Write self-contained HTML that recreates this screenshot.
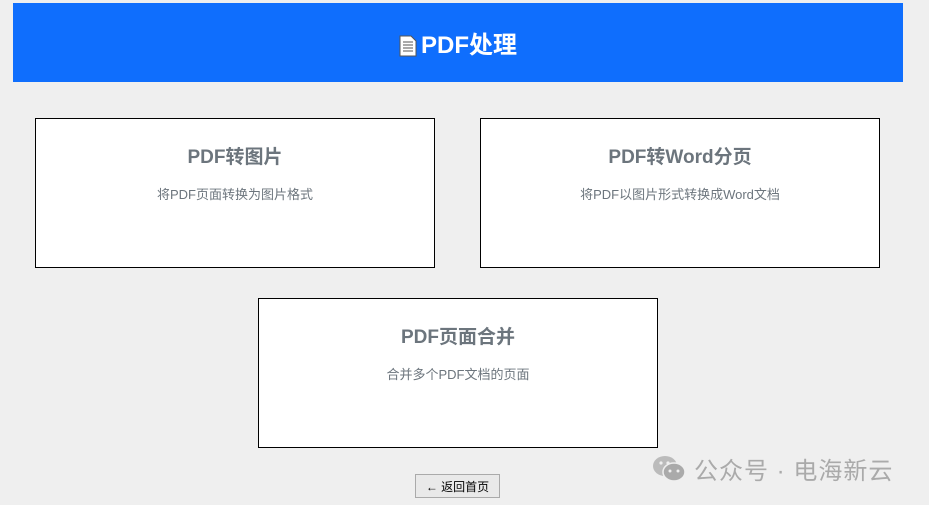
<!DOCTYPE html>
<html><head><meta charset="utf-8"><style>
body{margin:0;width:929px;height:505px;background:#efefef;font-family:"Liberation Sans","Noto Sans CJK SC",sans-serif;position:relative;overflow:hidden}
.hdr{position:absolute;left:13px;top:3px;width:890px;height:79px;background:#0f6efd;color:#fff;font-weight:bold;font-size:24px;display:flex;align-items:center;justify-content:center}
.card{position:absolute;width:398px;height:148px;background:#fff;border:1px solid #000;text-align:center}
.card h3{margin:28px 0 0;font-size:19px;color:#6c757d;font-weight:bold;line-height:22px}
.card p{margin:18px 0 0;font-size:13px;color:#6c757d;line-height:16px}
.btn{position:absolute;left:415px;top:474px;width:83px;height:22px;border:1px solid #aaa;background:#e9e9e9;font-size:12px;display:flex;align-items:center;justify-content:center;color:#000}
.wm{position:absolute;left:652px;top:451px;font-size:24px;color:#aaa;display:flex;align-items:center;gap:8px;letter-spacing:1px}
</style></head><body>
<div class="hdr"><svg width="18" height="22" viewBox="0 0 18 22" style="margin-right:4px;margin-top:6px"><path d="M1 1h11l5 5v15H1z" fill="#fff" stroke="#555" stroke-width="1"/><path d="M4 7h10M4 10h10M4 13h10M4 16h10" stroke="#555" stroke-width="1"/></svg>PDF处理</div>
<div class="card" style="left:35px;top:118px"><h3>PDF转图片</h3><p>将PDF页面转换为图片格式</p></div>
<div class="card" style="left:480px;top:118px"><h3>PDF转Word分页</h3><p>将PDF以图片形式转换成Word文档</p></div>
<div class="card" style="left:258px;top:298px"><h3>PDF页面合并</h3><p>合并多个PDF文档的页面</p></div>
<div class="btn">← 返回首页</div>
<div class="wm"><svg width="34" height="28" viewBox="0 0 34 28"><ellipse cx="13" cy="11" rx="12" ry="10" fill="#bbb"/><ellipse cx="22" cy="17" rx="11" ry="9" fill="#aaa" stroke="#efefef" stroke-width="1.5"/><circle cx="9" cy="8" r="1.6" fill="#efefef"/><circle cx="16" cy="8" r="1.6" fill="#efefef"/><circle cx="18" cy="16" r="1.5" fill="#efefef"/><circle cx="26" cy="16" r="1.5" fill="#efefef"/></svg><span>公众号 · 电海新云</span></div>
</body></html>
